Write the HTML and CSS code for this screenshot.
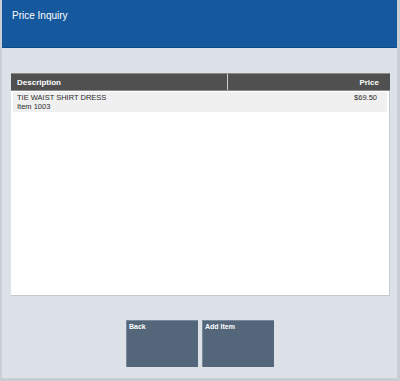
FILE: index.html
```html
<!DOCTYPE html>
<html lang="en">
<head>
    <meta charset="UTF-8">
    <meta name="viewport" content="width=device-width, initial-scale=1.0">
    <title>Price Inquiry</title>
    <link rel="stylesheet" href="styles.css">
</head>
<body>
    <div class="screen">
        <div class="header">
            <h1>Price Inquiry</h1>
        </div>

        <div class="content">
            <div class="table">
                <div class="table-head">
                    <div class="col-desc">Description</div>
                    <div class="col-price">Price</div>
                </div>
                <div class="table-body">
                    <div class="row">
                        <div class="col-desc">
                            <div>TIE WAIST SHIRT DRESS</div>
                            <div>Item 1003</div>
                        </div>
                        <div class="col-price">$69.50</div>
                    </div>
                </div>
            </div>

            <div class="button-group">
                <button class="action">Back</button>
                <button class="action">Add Item</button>
            </div>
        </div>
    </div>
</body>
</html>
```

FILE: styles.css
```css
body {
    margin: 0;
    font-family: "Liberation Sans", Arial, sans-serif;
    background-color: #c9ced4;
}
.screen {
    width: 395px;
    height: 378px;
    margin-left: 2px;
    background-color: #dce2e8;
    display: flex;
    flex-direction: column;
}
.header {
    height: 48px;
    background-color: #16589e;
    border-bottom: 1px solid #0f4a88;
    box-sizing: border-box;
}
.header h1 {
    margin: 0;
    padding: 10px 0 0 10px;
    font-size: 10px;
    font-weight: normal;
    color: #ffffff;
}
.content {
    padding: 25px 0 0 9px;
}
.table {
    width: 379px;
}
.table-head {
    display: flex;
    height: 18px;
    background-color: #505050;
    border-top: 1px solid #8a8a8a;
    border-bottom: 1px solid #8a8a8a;
    color: #ffffff;
    font-size: 8px;
    font-weight: bold;
    line-height: 17px;
    box-sizing: border-box;
}
.table-head .col-desc {
    width: 210px;
    padding-left: 6px;
    border-right: 1px solid #d0d0d0;
}
.table-head .col-price {
    flex: 1;
    text-align: right;
    padding-right: 11px;
}
.table-body {
    height: 203px;
    background-color: #ffffff;
    border-right: 1px solid #c4c9ce;
    border-bottom: 1px solid #c4c9ce;
    padding: 1px 2px 0 2px;
}
.row {
    display: flex;
    height: 20px;
    background-color: #f0f0f0;
    font-size: 7.5px;
    color: #2a2a2a;
    line-height: 9px;
    padding-top: 1px;
    box-sizing: border-box;
}
.row .col-desc {
    flex: 1;
    padding-left: 4px;
}
.row .col-price {
    padding-right: 10px;
}
.button-group {
    display: flex;
    gap: 4px;
    margin: 24px 0 0 115px;
}
.action {
    width: 72px;
    height: 47px;
    padding: 2px 2px;
    margin: 0;
    background-color: #546679;
    border: none;
    border-top: 1px solid #7a8a9a;
    border-left: 1px solid #7a8a9a;
    color: #ffffff;
    font-family: "Liberation Sans", Arial, sans-serif;
    font-size: 7px;
    font-weight: bold;
    text-align: left;
    display: flex;
    align-items: flex-start;
}
```
